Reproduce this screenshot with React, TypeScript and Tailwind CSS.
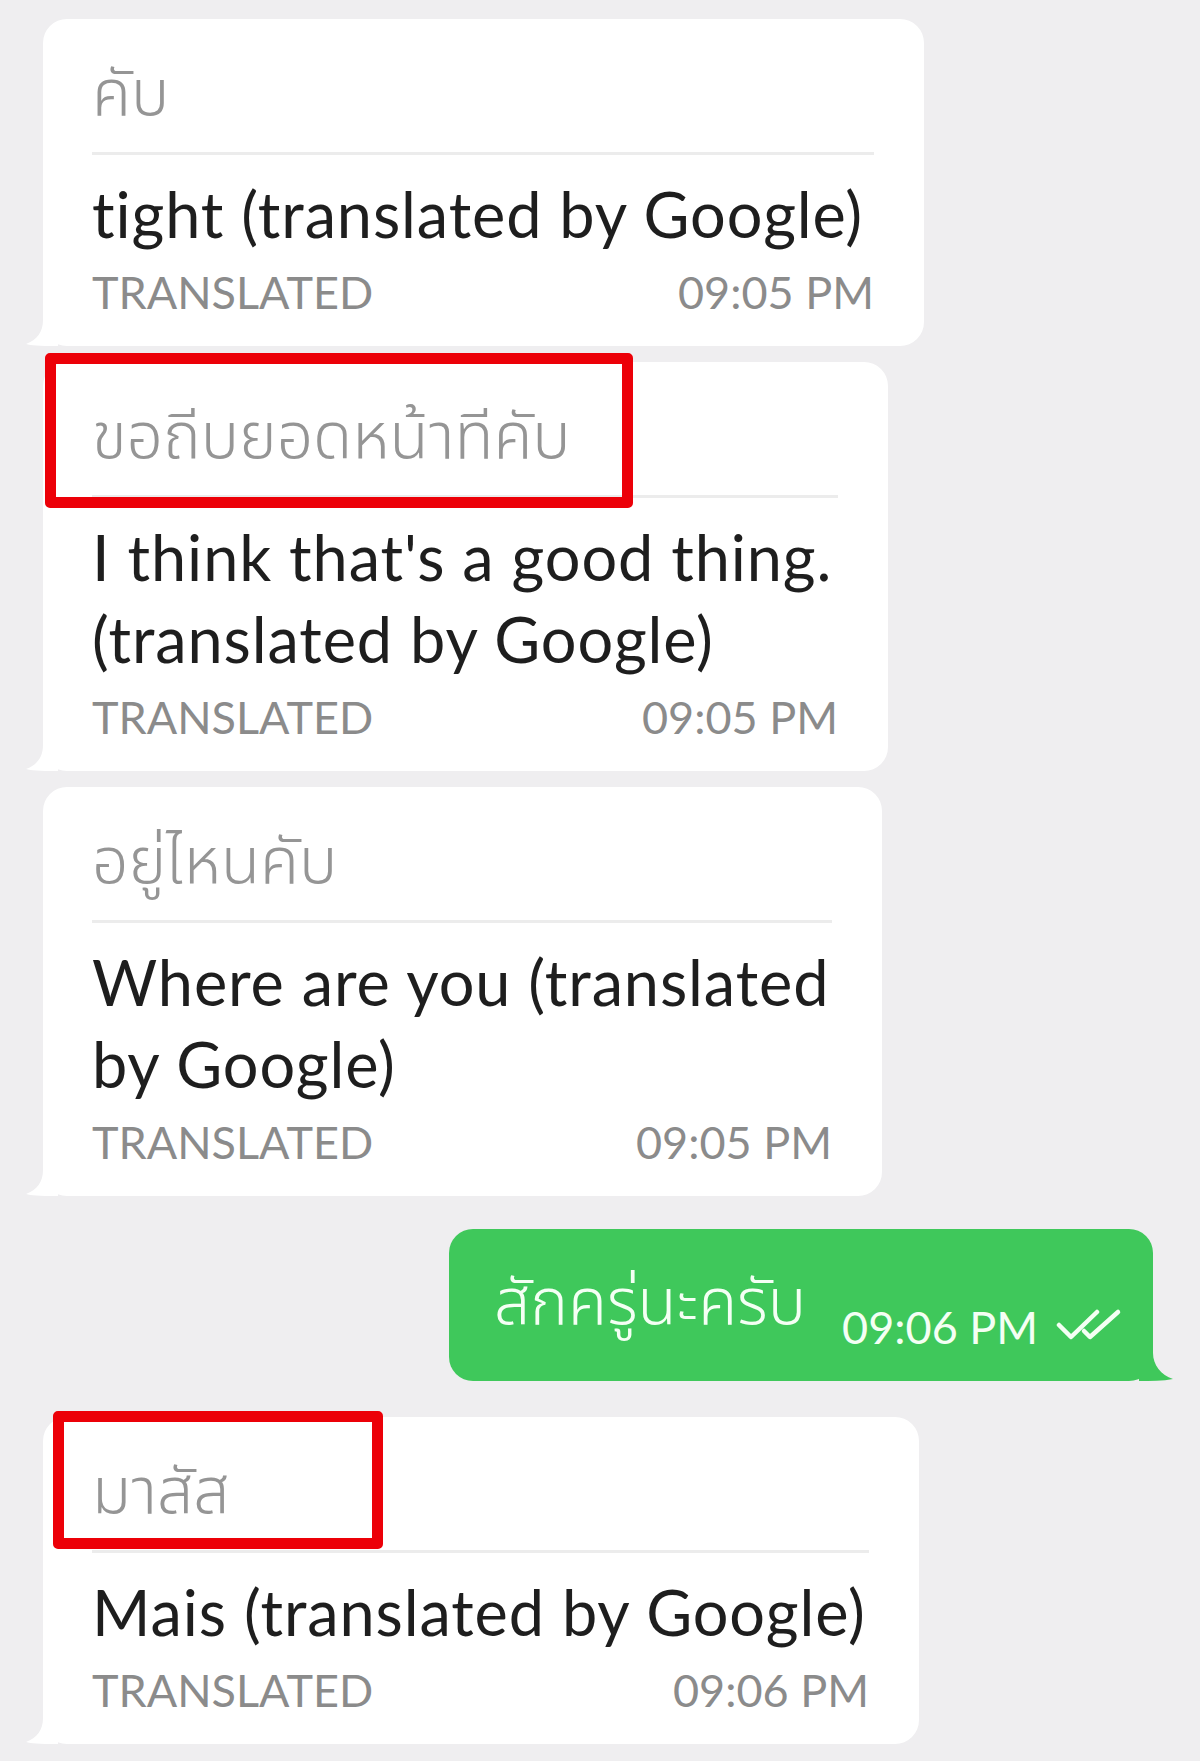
import React from "react";

const EN = { fontFamily: 'Lato, "Noto Sans", sans-serif' };
const TH = { fontFamily: '"Noto Sans Thai", "Noto Sans Thai Looped", Loma, Garuda, Kinnari, "Noto Sans", sans-serif' };

function LeftTail() {
  return (
    <svg className="absolute left-[-17px] bottom-0" width="32" height="30" viewBox="0 0 32 30">
      <path d="M17 4 C17 16 11 24 0 28 C8 30 20 30 32 30 L32 4 Z" fill="#ffffff" />
    </svg>
  );
}

function RightTail() {
  return (
    <svg className="absolute right-[-20px] bottom-0" width="34" height="30" viewBox="0 0 34 30">
      <path d="M14 2 C14 14 22 24 34 28 C24 30 12 30 0 30 L0 2 Z" fill="#3fc85b" />
    </svg>
  );
}

function RedBox({ cls }: { cls: string }) {
  return <div className={"absolute border-[11px] border-[#ec0008] rounded-[5px] " + cls} />;
}

function Incoming({
  thai,
  lines,
  time,
  width,
  box,
}: {
  thai: string;
  lines: string[];
  time: string;
  width: string;
  box?: string;
}) {
  return (
    <div className={"relative ml-[43px] bg-white rounded-[24px] pl-[49px] pr-[50px] pt-[42px] pb-[28px] " + width}>
      <LeftTail />
      {box && <RedBox cls={box} />}
      <div className="text-[64px] leading-[70px] font-light text-[#959595] whitespace-nowrap" style={TH}>
        {thai}
      </div>
      <div className="mt-[21px] h-[3px] bg-[#ececec]" />
      <div className="mt-[18px]">
        {lines.map((l) => (
          <div key={l} className="text-[63px] leading-[82px] tracking-[0.9px] text-[#1e1e1e] whitespace-nowrap" style={EN}>
            {l}
          </div>
        ))}
      </div>
      <div className="mt-[13px] flex justify-between items-center h-[50px] text-[45px] text-[#8b8b8b]" style={EN}>
        <span>TRANSLATED</span>
        <span>{time}</span>
      </div>
    </div>
  );
}

export default function App() {
  return (
    <div className="w-[1200px] h-[1761px] bg-[#efeef0] pt-[19px] flex flex-col overflow-hidden">
      <Incoming
        thai="คับ"
        lines={["tight (translated by Google)"]}
        time="09:05 PM"
        width="w-[881px]"
      />
      <div className="h-[16px]" />
      <Incoming
        thai="ขอถีบยอดหน้าทีคับ"
        lines={["I think that's a good thing.", "(translated by Google)"]}
        time="09:05 PM"
        width="w-[845px]"
        box="left-[2px] top-[-9px] w-[588px] h-[155px]"
      />
      <div className="h-[16px]" />
      <Incoming
        thai="อยู่ไหนคับ"
        lines={["Where are you (translated", "by Google)"]}
        time="09:05 PM"
        width="w-[839px]"
      />
      <div className="h-[33px]" />
      <div className="relative ml-[449px] w-[704px] h-[152px] bg-[#3fc85b] rounded-[24px] flex items-center pl-[45px] pr-[28px]">
        <RightTail />
        <span className="text-[64px] leading-[70px] font-light text-[#f4fff4] whitespace-nowrap" style={TH}>
          สักครู่นะครับ
        </span>
        <span className="ml-[36px] mt-[44px] text-[45px] leading-[50px] text-[#f4fff4] whitespace-nowrap" style={EN}>
          09:06 PM
        </span>
        <svg className="ml-[18px] mt-[40px]" width="66" height="34" viewBox="0 0 66 34">
          <path d="M3 17 L15 29 L41 4" stroke="#f4fff4" strokeWidth="4.5" fill="none" strokeLinecap="round" strokeLinejoin="round" />
          <path d="M28 23 L34 29 L62 4" stroke="#f4fff4" strokeWidth="4.5" fill="none" strokeLinecap="round" strokeLinejoin="round" />
        </svg>
      </div>
      <div className="h-[36px]" />
      <Incoming
        thai="มาสัส"
        lines={["Mais (translated by Google)"]}
        time="09:06 PM"
        width="w-[876px]"
        box="left-[10px] top-[-6px] w-[330px] h-[138px]"
      />
    </div>
  );
}
